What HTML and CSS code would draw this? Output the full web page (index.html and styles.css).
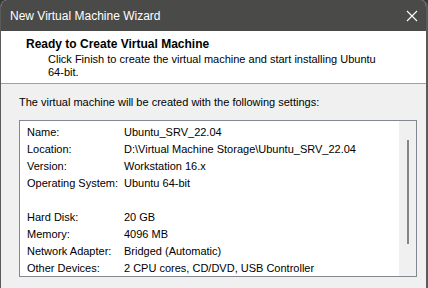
FILE: index.html
```html
<!DOCTYPE html>
<html>
<head>
<meta charset="utf-8">
<link rel="stylesheet" href="styles.css">
</head>
<body>
<div class="window">
  <div class="titlebar">
    <span class="title">New Virtual Machine Wizard</span>
    <svg class="close" width="12" height="12" viewBox="0 0 12 12"><path d="M1 1 L11 11 M11 1 L1 11" stroke="#ffffff" stroke-width="1.1" fill="none"/></svg>
  </div>
  <div class="header">
    <div class="heading">Ready to Create Virtual Machine</div>
    <div class="subtext">Click Finish to create the virtual machine and start installing Ubuntu<br>64-bit.</div>
  </div>
  <div class="content">
    <div class="intro">The virtual machine will be created with the following settings:</div>
    <div class="listbox">
      <div class="rows">
        <div class="row"><span class="label">Name:</span><span class="value">Ubuntu_SRV_22.04</span></div>
        <div class="row"><span class="label">Location:</span><span class="value">D:\Virtual Machine Storage\Ubuntu_SRV_22.04</span></div>
        <div class="row"><span class="label">Version:</span><span class="value">Workstation 16.x</span></div>
        <div class="row"><span class="label">Operating System:</span><span class="value">Ubuntu 64-bit</span></div>
        <div class="row"><span class="label"></span><span class="value"></span></div>
        <div class="row"><span class="label">Hard Disk:</span><span class="value">20 GB</span></div>
        <div class="row"><span class="label">Memory:</span><span class="value">4096 MB</span></div>
        <div class="row"><span class="label">Network Adapter:</span><span class="value">Bridged (Automatic)</span></div>
        <div class="row"><span class="label">Other Devices:</span><span class="value">2 CPU cores, CD/DVD, USB Controller</span></div>
      </div>
      <div class="scrollbar"><div class="thumb"></div></div>
    </div>
  </div>
</div>
</body>
</html>
```
FILE: styles.css
```css
html, body {
  margin: 0;
  padding: 0;
  background: #3a3a3a;
}
body {
  font-family: "Liberation Sans", Arial, sans-serif;
  font-size: 11px;
  color: #000;
}
.window {
  width: 425px;
  height: 288px;
  border-left: 1px solid #5a5a5a;
  border-right: 2px solid #5a5a5a;
  background: #f0f0f0;
  border-top-right-radius: 7px;
  border-top-left-radius: 7px;
  overflow: hidden;
  display: flex;
  flex-direction: column;
}
.titlebar {
  height: 31px;
  background: #4a4a48;
  display: flex;
  align-items: center;
  justify-content: space-between;
  padding: 0 8px 0 9px;
  flex: none;
}
.title {
  color: #ffffff;
  font-size: 12px;
}
.close {
  display: block;
}
.header {
  background: #ffffff;
  border-bottom: 1px solid #a0a0a0;
  flex: none;
  padding: 5px 0 0 25px;
  box-sizing: border-box;
  height: 53px;
}
.heading {
  font-weight: bold;
  font-size: 12px;
  line-height: 17px;
}
.subtext {
  padding-left: 22px;
  line-height: 13px;
}
.content {
  padding: 10px 0 0 18px;
  flex: 1;
}
.intro {
  line-height: 16px;
}
.listbox {
  margin-top: 10px;
  width: 396px;
  height: 155px;
  border: 1px solid #828790;
  background: #ffffff;
  display: flex;
}
.rows {
  flex: 1;
  padding: 3px 0 0 7px;
  overflow: hidden;
}
.row {
  display: flex;
  height: 17px;
  line-height: 17px;
  white-space: nowrap;
}
.label {
  width: 97px;
  flex: none;
}
.scrollbar {
  width: 17px;
  background: #f0f0f0;
  display: flex;
  justify-content: center;
  padding-top: 19px;
  box-sizing: border-box;
}
.thumb {
  width: 2px;
  height: 104px;
  background: #858585;
}
```
